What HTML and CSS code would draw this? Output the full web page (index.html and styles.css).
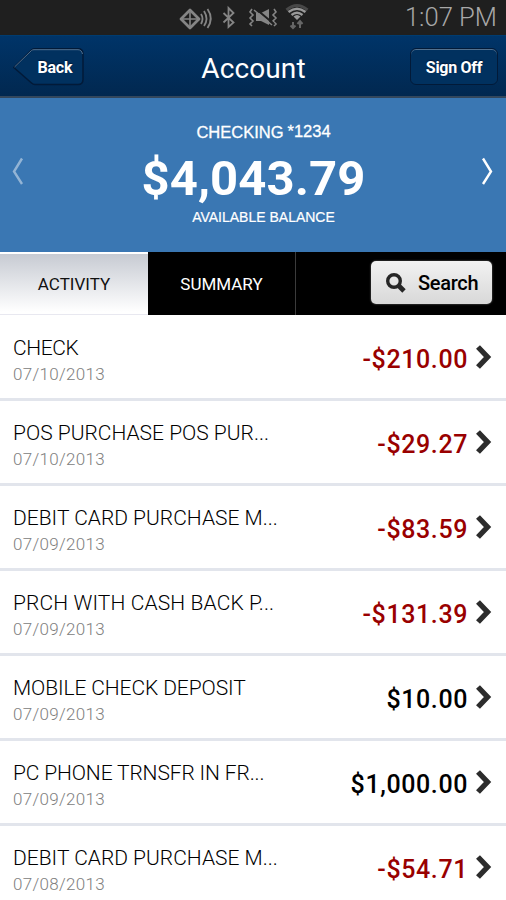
FILE: index.html
```html
<!DOCTYPE html>
<html lang="en">
<head>
<meta charset="utf-8">
<title>Account</title>
<link rel="stylesheet" href="styles.css">
</head>
<body>
<div class="status">
  <svg class="status-icons" width="160" height="36" viewBox="0 0 160 36" fill="none" stroke="#858585" stroke-width="1.5">
    <path d="M11 19 20 10 29 19 20 28Z" stroke-width="2.800" stroke-linejoin="round"/><path d="M11 19H29M20 10V28" stroke-width="1.600"/>
    <path d="M31 14Q34 18.5 31 24M34 11Q39 19 34 26M37.500 9Q44 18.500 37.500 28" stroke-width="1.8"/>
    <path d="M53.500 13 63.500 22.500 58.500 27V8L63.500 13 53.500 22.500" stroke-width="1.8"/>
    <path d="M82 9 80 12 83 15 80 18 83 21 80 24 82 26M104 9 106 12 103 15 106 18 103 21 106 24 104 26" stroke-width="1.6"/>
    <path d="M86 13H91L99 9V25L91 21H86Z" fill="#858585" stroke="none"/><path d="M86 9 104 24" stroke="#1f1f1f" stroke-width="2"/><path d="M84 10 102 25"/>
    <path d="M116.500 10Q127 1 137.500 10" stroke="#484848" stroke-width="3"/>
    <path d="M118.500 12Q127 5.500 135.500 12M121.500 15Q127 10.500 132.500 15" stroke="#999" stroke-width="2.300"/><path d="M123.500 16.500Q127 13.500 130.500 16.500L127 20Z" fill="#999" stroke="none"/>
    <path d="M123 22V28M120.500 25.500 123 28 125.500 25.500M130 28V21M127.500 24 130 21 132.500 24" stroke="#666" stroke-width="2"/>
  </svg>
  <span class="clock">1:07 PM</span>
</div>
<header class="header">
  <a class="back">
    <svg width="72" height="40" viewBox="0 0 72 40"><path d="M.8 19.500 18.500 2Q20 .8 22 .8H65Q70 .8 70 6V31.500Q70 36.500 65 36.500H22Q20 36.500 18.500 35Z" fill="#01315f" stroke="#021a38" stroke-width="1.500"/><path d="M1.500 19 18.500 2.500Q19.500 1.700 21 1.700H65Q68.500 1.700 69.500 6" fill="none" stroke="#53718f"/></svg>
    <span class="back-label">Back</span>
  </a>
  <h1 class="title">Account</h1>
  <a class="signoff"><span class="signoff-label">Sign Off</span></a>
</header>
<section class="balance">
  <svg class="arrow dim" width="12" height="28" viewBox="0 0 12 28"><path d="M10 1.500 2 14.500 10 27"/></svg>
  <div class="balance-body">
    <div class="account"><span class="acct-type">CHECKING</span><span class="acct-no">*1234</span></div>
    <div class="total"><span class="total-value">$4,043.79</span></div>
    <div class="caption">AVAILABLE BALANCE</div>
  </div>
  <svg class="arrow" width="12" height="28" viewBox="0 0 12 28"><path d="M2 1.500 10 14.500 2 27"/></svg>
</section>
<nav class="tabs">
  <a class="tab active"><span class="tab-label">ACTIVITY</span></a>
  <a class="tab summary"><span class="tab-label">SUMMARY</span></a>
  <a class="search">
    <svg width="20" height="20" viewBox="0 0 20 20" fill="none" stroke="#262626"><circle cx="8" cy="8" r="6.300" stroke-width="3.400"/><path d="M12 12 18 18" stroke-width="4.800"/></svg>
    <span class="search-label">Search</span>
  </a>
</nav>
<main class="list">
  <div class="row"><div class="info"><div class="name n1">CHECK</div><div class="date">07/10/2013</div></div><span class="amount debit">-$210.00</span><svg class="chev" width="16" height="26" viewBox="0 0 16 26"><path d="M2 3 11.500 13 2 23"/></svg></div>
  <div class="row"><div class="info"><div class="name n2">POS PURCHASE POS PUR...</div><div class="date">07/10/2013</div></div><span class="amount debit">-$29.27</span><svg class="chev" width="16" height="26" viewBox="0 0 16 26"><path d="M2 3 11.500 13 2 23"/></svg></div>
  <div class="row"><div class="info"><div class="name n3">DEBIT CARD PURCHASE M...</div><div class="date">07/09/2013</div></div><span class="amount debit">-$83.59</span><svg class="chev" width="16" height="26" viewBox="0 0 16 26"><path d="M2 3 11.500 13 2 23"/></svg></div>
  <div class="row"><div class="info"><div class="name n4">PRCH WITH CASH BACK P...</div><div class="date">07/09/2013</div></div><span class="amount debit">-$131.39</span><svg class="chev" width="16" height="26" viewBox="0 0 16 26"><path d="M2 3 11.500 13 2 23"/></svg></div>
  <div class="row"><div class="info"><div class="name n5">MOBILE CHECK DEPOSIT</div><div class="date">07/09/2013</div></div><span class="amount">$10.00</span><svg class="chev" width="16" height="26" viewBox="0 0 16 26"><path d="M2 3 11.500 13 2 23"/></svg></div>
  <div class="row"><div class="info"><div class="name n6">PC PHONE TRNSFR IN FR...</div><div class="date">07/09/2013</div></div><span class="amount">$1,000.00</span><svg class="chev" width="16" height="26" viewBox="0 0 16 26"><path d="M2 3 11.500 13 2 23"/></svg></div>
  <div class="row"><div class="info"><div class="name n7">DEBIT CARD PURCHASE M...</div><div class="date">07/08/2013</div></div><span class="amount debit">-$54.71</span><svg class="chev" width="16" height="26" viewBox="0 0 16 26"><path d="M2 3 11.500 13 2 23"/></svg></div>
</main>
</body>
</html>
```
FILE: styles.css
```css
* { box-sizing: border-box; }
body { margin: 0; width: 506px; height: 900px; overflow: hidden; background: #fff; font-family: Roboto, "Liberation Sans", sans-serif; color: #000; }
svg { display: block; flex: none; }
.status { height: 35px; background: #1f1f1f; display: flex; justify-content: space-between; overflow: hidden; padding: 0 9px 0 170px; }
.clock { font-size: 25.6px; line-height: 35px; font-weight: 300; color: #a8a8a8; white-space: nowrap; }
.header { height: 63px; display: flex; align-items: flex-start; justify-content: space-between; padding: 12px 8px 0 13px; background: linear-gradient(#003468, #012850); border-bottom: 2px solid #33475c; border-top: 1px solid #003c70; }
.back { display: grid; width: 88px; }
.back > * { grid-area: 1 / 1; }
.back-label { font-size: 16px; line-height: 39px; font-weight: 700; color: #fff; padding-left: 24.5px; letter-spacing: -.2px; text-shadow: 0 -1px 1px #001838; }
.title { margin: 0; font-size: 28px; line-height: 41px; font-weight: 400; color: #fff; padding-right: 4px; letter-spacing: .1px; }
.signoff { width: 88px; height: 37px; border: 1px solid #021a38; border-radius: 6px; background: #01315f; box-shadow: inset 0 1px #53718f; text-align: center; }
.signoff-label { font-size: 16px; line-height: 38px; font-weight: 700; color: #fff; letter-spacing: -.3px; text-shadow: 0 -1px 1px #001838; }
.balance { height: 154px; background: #3a77b3; display: flex; justify-content: space-between; padding: 0 13px 0 12px; color: #fff; }
.arrow { margin-top: 59px; fill: none; stroke: #fff; stroke-width: 2.4; }
.dim { opacity: .45; }
.balance-body { display: flex; flex-direction: column; align-items: center; font-family: "Liberation Sans", sans-serif; }
.account { display: flex; gap: 4px; height: 50px; padding: 23px 0 0 22px; font-size: 16.5px; line-height: 22px; -webkit-text-stroke: .3px #fff; }
.acct-no { margin-top: -1px; }
.total { font-family: Roboto, sans-serif; font-size: 49px; line-height: 61px; height: 58px; font-weight: 700; letter-spacing: .1px; padding-left: 2px; }
.caption { font-size: 14px; line-height: 22px; padding-left: 22px; -webkit-text-stroke: .2px #fff; }
.tabs { height: 63px; background: #000; display: flex; align-items: flex-start; }
.tab { width: 148px; height: 63px; text-align: center; font-size: 17px; line-height: 64px; }
.active { background: linear-gradient(#c5c9d1, #fff 95%); box-shadow: inset 0 2px #fff, inset 0 -1px #e8e8f0; font-weight: 400; color: #111; }
.summary { color: #fff; border-right: 1px solid #3b3b3b; }
.search { margin: 9px 0 0 75px; width: 121px; height: 43px; border-radius: 5px; background: linear-gradient(#f2f2f2, #d8d8d8); display: flex; align-items: center; gap: 12px; padding: 1px 0 0 15px; font-size: 20px; letter-spacing: -.3px; font-weight: 500; line-height: 49px; box-shadow: 0 0 2px #777; }
.list { padding-top: 1px; }
.row { height: 85px; border-bottom: 3px solid #e2e5ec; display: flex; align-items: flex-start; padding: 0 14px 0 13px; }
.info { flex: 1; padding-top: 19px; }
.name { font-size: 21px; line-height: 26px; font-weight: 300; white-space: nowrap; }
.n1 { letter-spacing: -.4px; }
.n4 { letter-spacing: .12px; }
.n5 { letter-spacing: -.1px; }
.n6 { letter-spacing: -.14px; }
.date { font-size: 17px; line-height: 27px; font-weight: 300; color: #808080; letter-spacing: .3px; }
.amount { font-size: 25px; line-height: 30px; font-weight: 500; padding-top: 29px; letter-spacing: .6px; }
.debit { color: #900; }
.chev { margin: 28px 0 0 8px; fill: none; stroke: #2c2c2c; stroke-width: 5.4; }
```
